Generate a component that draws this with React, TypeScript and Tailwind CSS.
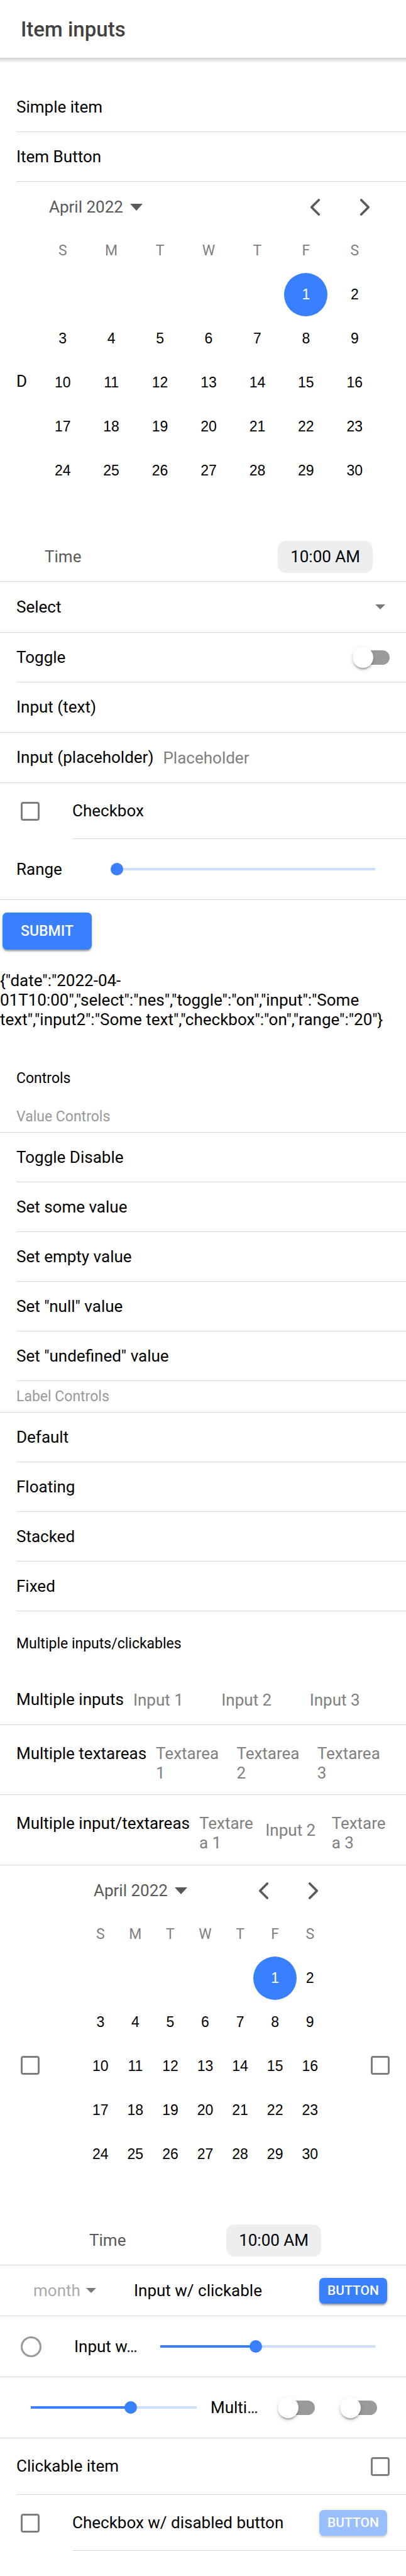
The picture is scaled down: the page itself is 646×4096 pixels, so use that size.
import { useId, useState, type ReactNode } from "react";

const LINE = "border-b border-[#d9d9d9]";

/** A list row. `lines` picks a full-width or an inset bottom border. */
function Item({
  lines = "inset",
  start,
  size = "min-h-[79px]",
  pad = "pr-[26px]",
  children,
}: {
  lines?: "full" | "inset";
  start?: ReactNode;
  size?: string;
  pad?: string;
  children?: ReactNode;
}) {
  const full = lines === "full";
  return (
    <div className={`flex items-stretch pl-[26px] ${size} ${full ? LINE : ""}`}>
      {start}
      <div className={`flex min-w-0 flex-1 items-center ${pad} ${full ? "" : LINE}`}>{children}</div>
    </div>
  );
}

function ButtonItem({ children }: { children: ReactNode }) {
  return (
    <button type="button" className="flex min-h-[79px] w-full pl-[26px] text-left">
      <span className={`flex flex-1 items-center self-stretch ${LINE}`}>{children}</span>
    </button>
  );
}

function Triangle({ className }: { className: string }) {
  return (
    <svg viewBox="0 0 20 11" className={className} fill="currentColor" preserveAspectRatio="none" aria-hidden="true">
      <path d="M0 0h20L10 11z" />
    </svg>
  );
}

function Chevron({ d }: { d: string }) {
  return (
    <svg
      viewBox="0 0 512 512"
      className="size-[41px]"
      fill="none"
      stroke="currentColor"
      strokeWidth="46"
      strokeLinecap="round"
      strokeLinejoin="round"
      aria-hidden="true"
    >
      <path d={d} />
    </svg>
  );
}

function Checkbox({ id, label }: { id?: string; label?: string }) {
  return (
    <input
      id={id}
      type="checkbox"
      aria-label={label}
      className="size-[30px] shrink-0 appearance-none rounded-[4px] border-[3px] border-[#7f7f7f] bg-white checked:border-[#3880ff] checked:bg-[#3880ff]"
    />
  );
}

function Toggle({ id, label }: { id?: string; label?: string }) {
  return (
    <input
      id={id}
      type="checkbox"
      role="switch"
      aria-label={label}
      className="flex h-[23px] w-[59px] shrink-0 appearance-none items-center rounded-full bg-[#9b9b9b] before:block before:size-[33px] before:shrink-0 before:rounded-full before:bg-white before:shadow-[0_4px_2px_-2px_rgba(0,0,0,0.2),0_3px_3px_rgba(0,0,0,0.14),0_2px_8px_rgba(0,0,0,0.12)] before:content-[''] checked:justify-end checked:bg-[#9cc0ff] checked:before:bg-[#3880ff]"
    />
  );
}

function Range({ id, label, initial }: { id?: string; label?: string; initial: number }) {
  const [value, setValue] = useState(initial);
  return (
    <input
      id={id}
      type="range"
      min={0}
      max={100}
      value={value}
      aria-label={label}
      onChange={(e) => setValue(Number(e.target.value))}
      style={{
        backgroundImage: `linear-gradient(to right, #3880ff ${value}%, #ccdeff ${value}%)`,
      }}
      className="h-5 w-full min-w-0 appearance-none bg-[length:100%_4px] bg-center bg-no-repeat [&::-webkit-slider-thumb]:size-5 [&::-webkit-slider-thumb]:appearance-none [&::-webkit-slider-thumb]:rounded-full [&::-webkit-slider-thumb]:bg-[#3880ff]"
    />
  );
}

const RAISED =
  "rounded-[7px] bg-[#3880ff] font-medium text-white uppercase shadow-[0_4px_2px_-2px_rgba(0,0,0,0.2),0_3px_3px_rgba(0,0,0,0.14),0_1px_6px_rgba(0,0,0,0.12)]";

function SmallButton({ disabled }: { disabled?: boolean }) {
  return (
    <button
      type="button"
      disabled={disabled}
      className={`h-[41px] min-w-[108px] shrink-0 text-[21px] ${RAISED} disabled:opacity-50`}
    >
      Button
    </button>
  );
}

const WEEKDAYS = ["S", "M", "T", "W", "T", "F", "S"];
const DAYS = Array.from({ length: 30 }, (_, i) => i + 1);

function Datetime() {
  const [selected, setSelected] = useState(1);
  return (
    <div className="min-w-0 flex-1 px-[17px]">
      <div className="flex h-20 items-center justify-between pr-0.5 pl-[17px] text-[#595959]">
        <button type="button" className="flex items-center gap-[11px]">
          April 2022
          <Triangle className="h-[11px] w-5" />
        </button>
        <div className="flex gap-[38px]">
          <button type="button" aria-label="Previous month">
            <Chevron d="M328 112L184 256l144 144" />
          </button>
          <button type="button" aria-label="Next month">
            <Chevron d="M184 112l144 144-144 144" />
          </button>
        </div>
      </div>
      <div className="mb-[6px] grid h-[58px] grid-cols-7 items-center text-center text-[23px] text-[#808080]">
        {WEEKDAYS.map((d, i) => (
          <span key={i}>{d}</span>
        ))}
      </div>
      <div className="grid auto-rows-[70px] grid-cols-7 font-['Liberation_Sans',Arial,sans-serif] text-[23px]">
        {DAYS.map((d) => (
          <div key={d} className={`flex items-center justify-center ${d === 1 ? "col-start-6" : ""}`}>
            <button
              type="button"
              onClick={() => setSelected(d)}
              className={`size-[69px] shrink-0 rounded-full ${d === selected ? "bg-[#3880ff] text-white" : "text-black"}`}
            >
              {d}
            </button>
          </div>
        ))}
      </div>
      <div className="flex items-center justify-between px-[10px] pt-[77px] pb-[13px]">
        <span className="text-[#595959]">Time</span>
        <button type="button" className="h-[51px] rounded-[13px] bg-[#edeef0] px-5">
          10:00 AM
        </button>
      </div>
    </div>
  );
}

const FIELD = "min-w-0 bg-transparent outline-none placeholder:text-[#808080] placeholder:opacity-100";

function Input({ id, placeholder }: { id?: string; placeholder?: string }) {
  return (
    <input
      id={id}
      type="text"
      placeholder={placeholder}
      aria-label={id ? undefined : placeholder}
      className={`h-[50px] w-0 flex-1 pr-[13px] ${FIELD}`}
    />
  );
}

function Textarea({ placeholder }: { placeholder: string }) {
  return (
    <textarea
      rows={2}
      placeholder={placeholder}
      aria-label={placeholder}
      className={`mt-[30px] block w-0 flex-1 resize-none self-start overflow-hidden pr-[13px] leading-[31px] ${FIELD}`}
    />
  );
}

function ListHeader({ children }: { children: ReactNode }) {
  return <h2 className="flex min-h-[74px] items-center px-[26px] text-[23px]">{children}</h2>;
}

function Divider({ children }: { children: ReactNode }) {
  return <h3 className={`flex min-h-[50px] items-center px-[26px] text-[23px] text-[#999999] ${LINE}`}>{children}</h3>;
}

const VALUE_CONTROLS = ["Toggle Disable", "Set some value", "Set empty value", 'Set "null" value', 'Set "undefined" value'];
const LABEL_CONTROLS = ["Default", "Floating", "Stacked", "Fixed"];

const RESULT =
  '{"date":"2022-04-01T10:00","select":"nes","toggle":"on","input":"Some text","input2":"Some text","checkbox":"on","range":"20"}';

export default function App() {
  const uid = useId();
  const id = (name: string) => `${uid}-${name}`;
  return (
    <div className="w-full bg-white pb-10 font-[Roboto,sans-serif] text-[26px] leading-[31px] text-black">
      <header>
        <div className="flex h-[92px] items-center px-[33px]">
          <h1 className="text-[33px] font-medium text-[#424242]">Item inputs</h1>
        </div>
        <div className="h-2 bg-linear-to-b from-[#d0d0d0] to-white" />
      </header>

      <main>
        <form onSubmit={(e) => e.preventDefault()} className="pt-[31px]">
          <Item>Simple item</Item>
          <ButtonItem>Item Button</ButtonItem>
          <Item lines="full" size="min-h-[636px]">
            <span className="w-[18px] shrink-0">D</span>
            <Datetime />
          </Item>
          <Item lines="full" size="min-h-[81px]" pad="pr-[33px]">
            <label htmlFor={id("select")}>Select</label>
            <select id={id("select")} className="h-[50px] flex-1 appearance-none bg-transparent outline-none" defaultValue="">
              <option value="" />
            </select>
            <Triangle className="h-2 w-4 text-[#7a7a7a]" />
          </Item>
          <Item>
            <label htmlFor={id("toggle")} className="flex-1">
              Toggle
            </label>
            <Toggle id={id("toggle")} />
          </Item>
          <Item lines="full" size="min-h-20" pad="pr-[13px]">
            <label htmlFor={id("text")} className="mr-[15px]">
              Input (text)
            </label>
            <Input id={id("text")} />
          </Item>
          <Item lines="full" size="min-h-20" pad="pr-[13px]">
            <label htmlFor={id("placeholder")} className="mr-[15px]">
              Input (placeholder)
            </label>
            <Input id={id("placeholder")} placeholder="Placeholder" />
          </Item>
          <Item
            size="min-h-[89px]"
            start={
              <div className="flex w-[89px] shrink-0 items-center pl-[7px]">
                <Checkbox id={id("checkbox")} />
              </div>
            }
          >
            <label htmlFor={id("checkbox")}>Checkbox</label>
          </Item>
          <Item lines="full" size="min-h-[97px]" pad="pr-[49px]">
            <label htmlFor={id("range")} className="w-[150px] shrink-0">
              Range
            </label>
            <Range id={id("range")} initial={0} />
          </Item>
          <button type="submit" className={`mt-5 ml-1 block h-[59px] min-w-[142px] text-[23px] ${RAISED}`}>
            Submit
          </button>
        </form>

        <output className="mt-[34px] block">{RESULT}</output>

        <section className="mt-10">
          <ListHeader>Controls</ListHeader>
          <Divider>Value Controls</Divider>
          {VALUE_CONTROLS.map((c) => (
            <ButtonItem key={c}>{c}</ButtonItem>
          ))}
          <Divider>Label Controls</Divider>
          {LABEL_CONTROLS.map((c) => (
            <ButtonItem key={c}>{c}</ButtonItem>
          ))}
        </section>

        <section className="pt-[14px]">
          <ListHeader>Multiple inputs/clickables</ListHeader>
          <div className="pt-[13px]">
            <Item lines="full" size="min-h-20" pad="pr-[13px]">
              <span className="mr-[15px] shrink-0">Multiple inputs</span>
              <Input placeholder="Input 1" />
              <Input placeholder="Input 2" />
              <Input placeholder="Input 3" />
            </Item>
            <Item lines="full" size="min-h-[111px]" pad="pr-[13px]">
              <span className="mt-[30px] mr-[15px] shrink-0 self-start">Multiple textareas</span>
              <Textarea placeholder="Textarea 1" />
              <Textarea placeholder="Textarea 2" />
              <Textarea placeholder="Textarea 3" />
            </Item>
            <Item lines="full" size="min-h-[112px]" pad="pr-[13px]">
              <span className="mt-[30px] mr-[15px] shrink-0 self-start">Multiple input/textareas</span>
              <Textarea placeholder="Textarea 1" />
              <Input placeholder="Input 2" />
              <Textarea placeholder="Textarea 3" />
            </Item>
            <Item
              lines="full"
              size="min-h-[636px]"
              start={
                <div className="flex w-[89px] shrink-0 items-center pl-[7px]">
                  <Checkbox label="Start checkbox" />
                </div>
              }
            >
              <Datetime />
              <div className="flex w-[82px] shrink-0 justify-end">
                <Checkbox label="End checkbox" />
              </div>
            </Item>
            <Item lines="full" size="min-h-[81px]" pad="pr-[30px]">
              <div className="flex w-[187px] shrink-0 items-center gap-[9px] pl-[27px]">
                <select aria-label="month" className="appearance-none bg-transparent text-[#ababab] outline-none" defaultValue="month">
                  <option>month</option>
                </select>
                <Triangle className="h-2 w-4 text-[#7a7a7a]" />
              </div>
              <span className="flex-1">Input w/ clickable</span>
              <SmallButton />
            </Item>
            <Item lines="full" size="min-h-[97px]" pad="pr-[49px]">
              <div className="flex w-[92px] shrink-0 items-center pl-[7px]">
                <input
                  id={id("radio")}
                  type="radio"
                  className="size-[33px] appearance-none rounded-full border-[3px] border-[#999999] checked:border-[10px] checked:border-[#3880ff]"
                />
              </div>
              <label htmlFor={id("radio")} className="w-[137px] shrink-0">
                Input w…
              </label>
              <Range label="Input with range" initial={44} />
            </Item>
            <Item lines="full" size="min-h-[97px]" pad="pr-[46px]">
              <div className="flex min-w-0 flex-1 pl-[23px]">
                <Range label="Range" initial={61} />
              </div>
              <span className="w-[129px] shrink-0 pl-[22px]">Multi…</span>
              <div className="flex shrink-0 gap-10">
                <Toggle label="First toggle" />
                <Toggle label="Second toggle" />
              </div>
            </Item>
            <Item size="min-h-[90px]">
              <label htmlFor={id("clickable")} className="flex-1">
                Clickable item
              </label>
              <Checkbox id={id("clickable")} />
            </Item>
            <Item
              size="min-h-[89px]"
              pad="pr-[30px]"
              start={
                <div className="flex w-[89px] shrink-0 items-center pl-[7px]">
                  <Checkbox id={id("disabled-button")} />
                </div>
              }
            >
              <label htmlFor={id("disabled-button")} className="flex-1">
                Checkbox w/ disabled button
              </label>
              <SmallButton disabled />
            </Item>
          </div>
        </section>
      </main>
    </div>
  );
}
